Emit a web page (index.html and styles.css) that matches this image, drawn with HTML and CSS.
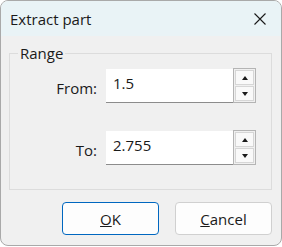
FILE: index.html
```html
<!DOCTYPE html>
<html lang="en">
<head>
  <meta charset="UTF-8">
  <title>Extract part</title>
  <link rel="stylesheet" href="styles.css">
</head>
<body>
  <div class="window">
    <div class="titlebar">
      <span class="title">Extract part</span>
      <svg class="close" width="12" height="12" viewBox="0 0 12 12">
        <path d="M0.5 0.5 L11.5 11.5 M11.5 0.5 L0.5 11.5" stroke="#1a1a1a" stroke-width="1.1" fill="none"/>
      </svg>
    </div>

    <div class="content">
      <div class="group">
        <span class="legend">Range</span>
        <div class="field-row">
          <label class="field-label">From:</label>
          <div class="spin-input">
            <div class="value">1.5</div>
            <div class="spinner">
              <div class="spin-btn"><span class="arrow-up"></span></div>
              <div class="spin-btn"><span class="arrow-down"></span></div>
            </div>
          </div>
        </div>
        <div class="field-row">
          <label class="field-label">To:</label>
          <div class="spin-input">
            <div class="value">2.755</div>
            <div class="spinner">
              <div class="spin-btn"><span class="arrow-up"></span></div>
              <div class="spin-btn"><span class="arrow-down"></span></div>
            </div>
          </div>
        </div>
      </div>

      <div class="actions">
        <button class="btn btn-default"><u>O</u>K</button>
        <button class="btn"><u>C</u>ancel</button>
      </div>
    </div>
  </div>
</body>
</html>
```

FILE: styles.css
```css
* {
  margin: 0;
  padding: 0;
  box-sizing: border-box;
}
body {
  background-color: #ffffff;
  font-family: 'Open Sans', 'Noto Sans', sans-serif;
  font-size: 14px;
  color: #1a1a1a;
}
.window {
  width: 282px;
  height: 246px;
  background-color: #f0f0f0;
  border: 1px solid #a9a9a9;
  border-radius: 8px;
  overflow: hidden;
}
.titlebar {
  height: 35px;
  background-color: #e9f3f6;
  display: flex;
  align-items: center;
  justify-content: space-between;
  padding: 0 15px 0 9px;
}
.title {
  font-size: 15px;
}
.content {
  padding: 17px 9px 0 8px;
}
.group {
  position: relative;
  border: 1px solid #dcdcdc;
  height: 137px;
  padding-top: 15px;
}
.legend {
  position: absolute;
  top: -11px;
  left: 8px;
  padding: 0 2px;
  background-color: #f0f0f0;
  font-size: 15px;
}
.field-row {
  display: flex;
  align-items: center;
  margin-bottom: 28px;
}
.field-label {
  width: 87px;
  text-align: right;
  margin-right: 9px;
  font-size: 15px;
  padding-top: 4px;
}
.spin-input {
  display: flex;
  height: 34px;
}
.value {
  width: 127px;
  height: 34px;
  background-color: #ffffff;
  border-bottom: 1px solid #8c8c8c;
  padding: 4px 0 0 7px;
  font-size: 15px;
}
.spinner {
  width: 23px;
  height: 35px;
  border: 1px solid #b4b4b4;
  display: flex;
  flex-direction: column;
  gap: 1px;
  padding: 1px;
  margin-top: -1px;
}
.spin-btn {
  flex: 1;
  background-color: #f9f9f9;
  border: 1px solid #d6d6d6;
  display: flex;
  align-items: center;
  justify-content: center;
}
.arrow-up {
  border-left: 3px solid transparent;
  border-right: 3px solid transparent;
  border-bottom: 4px solid #1a1a1a;
}
.arrow-down {
  border-left: 3px solid transparent;
  border-right: 3px solid transparent;
  border-top: 4px solid #1a1a1a;
}
.actions {
  display: flex;
  justify-content: flex-end;
  gap: 16px;
  margin-top: 12px;
}
.btn {
  width: 97px;
  height: 33px;
  background-color: #fdfdfd;
  border: 1px solid #d0d0d0;
  border-radius: 4px;
  font-family: inherit;
  font-size: 15px;
  color: #1a1a1a;
}
.btn-default {
  border-color: #0067c0;
}
```
